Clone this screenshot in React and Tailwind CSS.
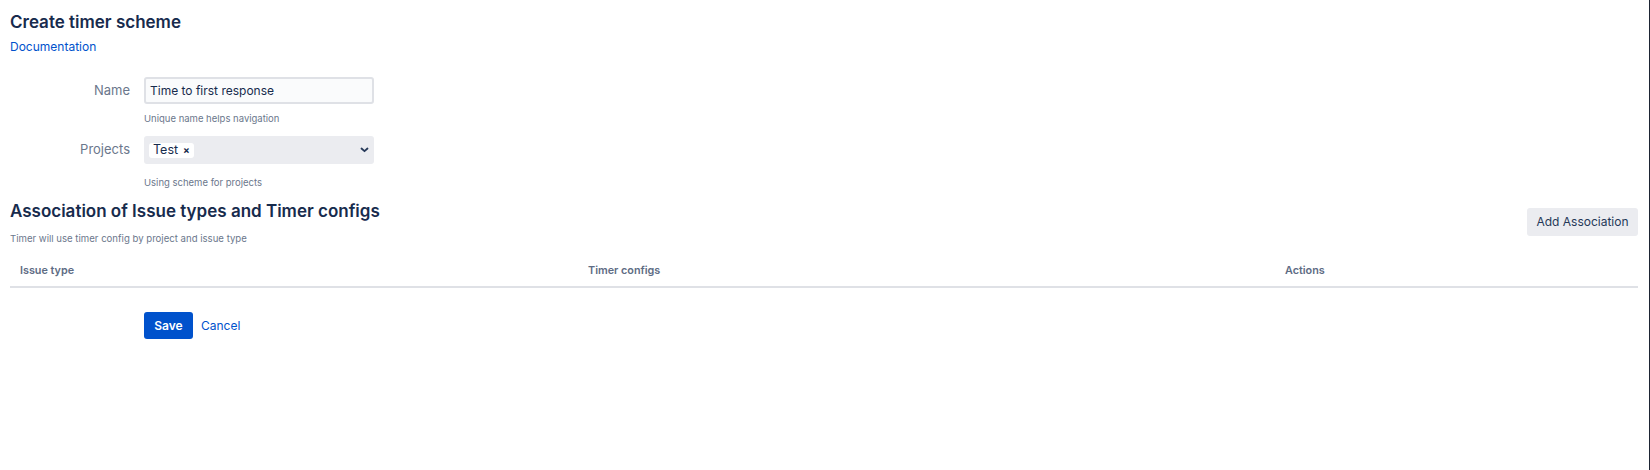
import React from "react";

export default function App() {
  return (
    <div
      className="w-full h-[470px] bg-white border-r border-[#1d2433] text-[#172b4d] overflow-hidden"
      style={{ fontFamily: "Inter, 'Noto Sans', sans-serif" }}
    >
      <div className="pl-[10px] pr-[11px] pt-[10px]">
        <h1 className="text-[17px] leading-[24px] font-semibold text-[#172b4d]">
          Create timer scheme
        </h1>
        <a className="block mt-[4px] text-[12px] leading-[18px] text-[#0052cc]">Documentation</a>

        <div className="mt-[21px] flex flex-col">
          <div className="flex items-center">
            <label className="w-[120px] text-right text-[13px] text-[#6b778c]">Name</label>
            <div className="ml-[14px] w-[230px] h-[27px] rounded-[3px] border-2 border-[#dfe1e6] bg-[#fafbfc] flex items-center px-[4px] text-[12px] text-[#172b4d]">
              Time to first response
            </div>
          </div>
          <div className="ml-[134px] mt-[8px] text-[9.5px] leading-[14px] text-[#6b778c]">
            Unique name helps navigation
          </div>

          <div className="flex items-center mt-[10px]">
            <label className="w-[120px] text-right text-[13px] text-[#6b778c]">Projects</label>
            <div className="ml-[14px] w-[230px] h-[28px] rounded-[3px] bg-[#ebecf0] flex items-center justify-between pl-[5px] pr-[5px]">
              <span className="flex items-center gap-[5px] bg-white rounded-[3px] px-[4px] h-[15px] text-[12.5px] text-[#172b4d]">
                Test
                <span className="text-[10px] font-bold leading-none">×</span>
              </span>
              <svg width="9" height="6" viewBox="0 0 9 6" fill="none">
                <path d="M1.5 1.5 L4.5 4.2 L7.5 1.5" stroke="#253858" strokeWidth="1.8" strokeLinecap="round" strokeLinejoin="round" />
              </svg>
            </div>
          </div>
          <div className="ml-[134px] mt-[12px] text-[9.5px] leading-[14px] text-[#6b778c]">
            Using scheme for projects
          </div>
        </div>

        <div className="flex justify-between items-start mt-[9px]">
          <div>
            <h2 className="text-[17px] leading-[24px] font-semibold text-[#172b4d]">
              Association of Issue types and Timer configs
            </h2>
            <p className="mt-[9px] text-[9.6px] leading-[14px] text-[#6b778c]">
              Timer will use timer config by project and issue type
            </p>
          </div>
          <button className="mt-[9px] h-[28px] w-[111px] rounded-[3px] bg-[#ebecf0] text-[12px] text-[#253858]">
            Add Association
          </button>
        </div>

        <div className="mt-[10px] flex h-[32px] items-center border-b-2 border-[#dfe1e6] text-[10.8px] font-semibold text-[#5e6c84]">
          <div className="w-[578px] pl-[10px]">Issue type</div>
          <div className="w-[697px]">Timer configs</div>
          <div className="flex-1">Actions</div>
        </div>

        <div className="mt-[24px] ml-[134px] flex items-center gap-[8px]">
          <button className="h-[27px] w-[49px] rounded-[3px] bg-[#0052cc] text-white text-[12px] font-semibold">
            Save
          </button>
          <a className="text-[12px] text-[#0052cc]">Cancel</a>
        </div>
      </div>
    </div>
  );
}
